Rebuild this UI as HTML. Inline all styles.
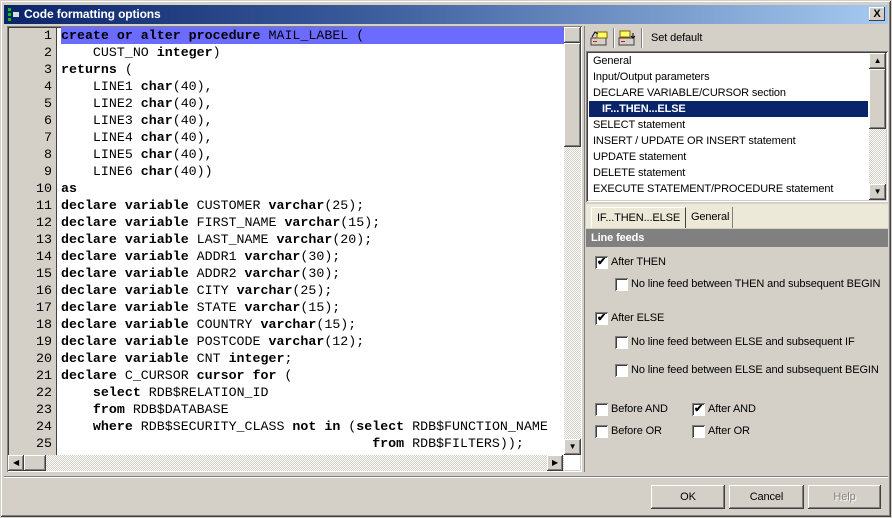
<!DOCTYPE html>
<html><head><style>
*{margin:0;padding:0;box-sizing:border-box}
body{width:892px;height:518px;background:#d4d0c8;font-family:"Liberation Sans",sans-serif;font-size:11px;letter-spacing:-0.12px;position:relative;overflow:hidden}
.a{position:absolute}
.win{left:0;top:0;width:892px;height:518px;border:1px solid #d4d0c8;box-shadow:inset -1px -1px #404040,inset 1px 1px #fff,inset -2px -2px #808080}
.title{left:4px;top:5px;width:884px;height:19px;background:linear-gradient(to right,#0a246a,#3a5a9a 40%,#a6caf0);color:#fff;font-weight:bold;font-size:12px;line-height:19px;padding-left:20px}
.xb{right:7px;top:7px;width:16px;height:14px;background:#d4d0c8;box-shadow:inset -1px -1px #404040,inset 1px 1px #fff;color:#000;font-size:11px;line-height:14px;text-align:center;font-weight:bold}
.sunken{box-shadow:inset 1px 1px #808080,inset -1px -1px #fff,inset 2px 2px #404040,inset -2px -2px #d4d0c8}
.code{left:7px;top:26px;width:575px;height:446px;background:#fff}
.gut{left:9px;top:28px;width:48px;height:427px;background:#d4d0c8;border-right:1px solid #404040}
.ln{position:absolute;left:9px;width:43px;text-align:right;font-family:"Liberation Mono",monospace;font-size:13.3px;letter-spacing:0;height:17px;line-height:17px}
.cl{position:absolute;left:61px;font-family:"Liberation Mono",monospace;font-size:13.3px;letter-spacing:0;white-space:pre;height:17px;line-height:17px}
.btn3{background:#d4d0c8;box-shadow:inset -1px -1px #404040,inset 1px 1px #fff,inset -2px -2px #808080}
.chk{width:13px;height:13px;background:#fff;box-shadow:inset 1px 1px #808080,inset -1px -1px #fff,inset 2px 2px #404040;font-size:11px;line-height:13px;text-align:center;font-weight:bold}
.li{position:absolute;left:593px;font-size:11px;height:16px;line-height:16px}
.btn{top:485px;height:24px;line-height:24px;text-align:center;font-size:11px}
</style></head><body>
<div class="a win"></div>
<div class="a title">Code formatting options</div>
<svg class="a" style="left:6px;top:8px" width="16" height="14"><rect x="2" y="0" width="3" height="3" fill="#0c0"/><rect x="2" y="5" width="3" height="3" fill="#0c0"/><rect x="2" y="10" width="3" height="3" fill="#0c0"/><rect x="7" y="4" width="6" height="5" fill="#ddd"/></svg>
<div class="a xb">X</div>

<div class="a code sunken"></div>
<div class="a gut"></div>
<div class="a" style="left:61px;top:27px;width:503px;height:17px;background:#6b6bff"></div>
<div id="lines"></div>
<div class="a" style="left:564px;top:27px;width:17px;height:428px;background:repeating-conic-gradient(#d4d0c8 0 25%,#fff 0 50%) 0 0/2px 2px"></div>
<div class="a btn3" style="left:564px;top:27px;width:17px;height:16px"></div>
<div class="a btn3" style="left:564px;top:43px;width:17px;height:104px"></div>
<div class="a btn3" style="left:564px;top:439px;width:17px;height:16px;font-size:8px;text-align:center;line-height:16px">▼</div>
<div class="a" style="left:9px;top:455px;width:555px;height:16px;background:repeating-conic-gradient(#d4d0c8 0 25%,#fff 0 50%) 0 0/2px 2px"></div>
<div class="a btn3" style="left:8px;top:455px;width:16px;height:16px;font-size:8px;text-align:center;line-height:16px">◀</div>
<div class="a btn3" style="left:24px;top:455px;width:22px;height:16px"></div>
<div class="a btn3" style="left:547px;top:455px;width:16px;height:16px;font-size:8px;text-align:center;line-height:16px">▶</div>

<div class="a" style="left:584px;top:26px;width:1px;height:446px;background:#808080"></div>

<svg class="a" style="left:590px;top:29px" width="20" height="18"><rect x="1" y="9" width="15" height="7" fill="#d4d0c8" stroke="#404040"/><rect x="3" y="12" width="4" height="1" fill="red"/><rect x="7" y="3" width="10" height="6" fill="#ff6" stroke="#806000"/><path d="M2 8 L5 3 L8 5" stroke="#000" fill="none"/></svg>
<div class="a" style="left:613px;top:28px;width:2px;height:20px;border-left:1px solid #808080;border-right:1px solid #fff"></div>
<svg class="a" style="left:618px;top:29px" width="20" height="18"><rect x="1" y="9" width="15" height="7" fill="#d4d0c8" stroke="#404040"/><rect x="3" y="12" width="4" height="1" fill="red"/><rect x="2" y="2" width="10" height="6" fill="#ff6" stroke="#806000"/><path d="M15 4 L15 9 M13 7 L15 9 L17 7" stroke="#000" fill="none"/></svg>
<div class="a" style="left:641px;top:28px;width:2px;height:20px;border-left:1px solid #808080;border-right:1px solid #fff"></div>
<div class="a" style="left:651px;top:31px;font-size:11px;line-height:14px">Set default</div>

<div class="a sunken" style="left:586px;top:51px;width:302px;height:151px;background:#fff"></div>
<div class="a" style="left:589px;top:101px;width:279px;height:16px;background:#0a246a"></div>
<div class="li" style="top:53px">General</div>
<div class="li" style="top:69px">Input/Output parameters</div>
<div class="li" style="top:85px">DECLARE VARIABLE/CURSOR section</div>
<div class="li" style="top:101px;left:602px;color:#fff;font-weight:bold">IF...THEN...ELSE</div>
<div class="li" style="top:117px">SELECT statement</div>
<div class="li" style="top:133px">INSERT / UPDATE OR INSERT statement</div>
<div class="li" style="top:149px">UPDATE statement</div>
<div class="li" style="top:165px">DELETE statement</div>
<div class="li" style="top:181px">EXECUTE STATEMENT/PROCEDURE statement</div>
<div class="a" style="left:869px;top:53px;width:17px;height:147px;background:repeating-conic-gradient(#d4d0c8 0 25%,#fff 0 50%) 0 0/2px 2px"></div>
<div class="a btn3" style="left:869px;top:53px;width:17px;height:16px;font-size:8px;text-align:center;line-height:16px">▲</div>
<div class="a btn3" style="left:869px;top:69px;width:17px;height:60px"></div>
<div class="a btn3" style="left:869px;top:184px;width:17px;height:16px;font-size:8px;text-align:center;line-height:16px">▼</div>

<div class="a" style="left:586px;top:204px;width:302px;height:24px;background:#ece9d8"></div>
<div class="a" style="left:591px;top:207px;width:95px;height:21px;border-right:1px solid #404040;border-left:1px solid #fff;border-top:1px solid #fff;line-height:21px;padding-left:5px">IF...THEN...ELSE</div>
<div class="a" style="left:687px;top:207px;width:46px;height:21px;border-right:1px solid #808080;line-height:21px;padding-left:4px">General</div>
<div class="a" style="left:586px;top:229px;width:302px;height:18px;background:#808080;color:#fff;font-weight:bold;font-size:11px;line-height:18px;padding-left:5px">Line feeds</div>

<div class="a chk" style="left:595px;top:256px">✔</div><div class="a" style="left:611px;top:256px;line-height:13px">After THEN</div>
<div class="a chk" style="left:615px;top:278px"></div><div class="a" style="left:631px;top:278px;line-height:13px">No line feed between THEN and subsequent BEGIN</div>
<div class="a chk" style="left:595px;top:312px">✔</div><div class="a" style="left:611px;top:312px;line-height:13px">After ELSE</div>
<div class="a chk" style="left:615px;top:336px"></div><div class="a" style="left:631px;top:336px;line-height:13px">No line feed between ELSE and subsequent IF</div>
<div class="a chk" style="left:615px;top:364px"></div><div class="a" style="left:631px;top:364px;line-height:13px">No line feed between ELSE and subsequent BEGIN</div>
<div class="a chk" style="left:595px;top:403px"></div><div class="a" style="left:611px;top:403px;line-height:13px">Before AND</div>
<div class="a chk" style="left:692px;top:403px">✔</div><div class="a" style="left:708px;top:403px;line-height:13px">After AND</div>
<div class="a chk" style="left:595px;top:425px"></div><div class="a" style="left:611px;top:425px;line-height:13px">Before OR</div>
<div class="a chk" style="left:692px;top:425px"></div><div class="a" style="left:708px;top:425px;line-height:13px">After OR</div>

<div class="a" style="left:4px;top:476px;width:884px;height:2px;border-top:1px solid #808080;border-bottom:1px solid #fff"></div>
<div class="a btn btn3" style="left:651px;width:74px">OK</div>
<div class="a btn btn3" style="left:729px;width:75px">Cancel</div>
<div class="a btn btn3" style="left:808px;width:73px;color:#808080;text-shadow:1px 1px #fff">Help</div>

<script>
var L=[
"<b>create or alter procedure</b> MAIL_LABEL (",
"    CUST_NO <b>integer</b>)",
"<b>returns</b> (",
"    LINE1 <b>char</b>(40),",
"    LINE2 <b>char</b>(40),",
"    LINE3 <b>char</b>(40),",
"    LINE4 <b>char</b>(40),",
"    LINE5 <b>char</b>(40),",
"    LINE6 <b>char</b>(40))",
"<b>as</b>",
"<b>declare variable</b> CUSTOMER <b>varchar</b>(25);",
"<b>declare variable</b> FIRST_NAME <b>varchar</b>(15);",
"<b>declare variable</b> LAST_NAME <b>varchar</b>(20);",
"<b>declare variable</b> ADDR1 <b>varchar</b>(30);",
"<b>declare variable</b> ADDR2 <b>varchar</b>(30);",
"<b>declare variable</b> CITY <b>varchar</b>(25);",
"<b>declare variable</b> STATE <b>varchar</b>(15);",
"<b>declare variable</b> COUNTRY <b>varchar</b>(15);",
"<b>declare variable</b> POSTCODE <b>varchar</b>(12);",
"<b>declare variable</b> CNT <b>integer</b>;",
"<b>declare</b> C_CURSOR <b>cursor for</b> (",
"    <b>select</b> RDB$RELATION_ID",
"    <b>from</b> RDB$DATABASE",
"    <b>where</b> RDB$SECURITY_CLASS <b>not in</b> (<b>select</b> RDB$FUNCTION_NAME",
"                                       <b>from</b> RDB$FILTERS));"];
var h="";
for(var i=0;i<L.length;i++){var t=27+i*17;
h+='<div class="ln" style="top:'+t+'px">'+(i+1)+'</div><div class="cl" style="top:'+t+'px">'+L[i]+'</div>';}
document.getElementById("lines").innerHTML=h;
</script>
</body></html>
